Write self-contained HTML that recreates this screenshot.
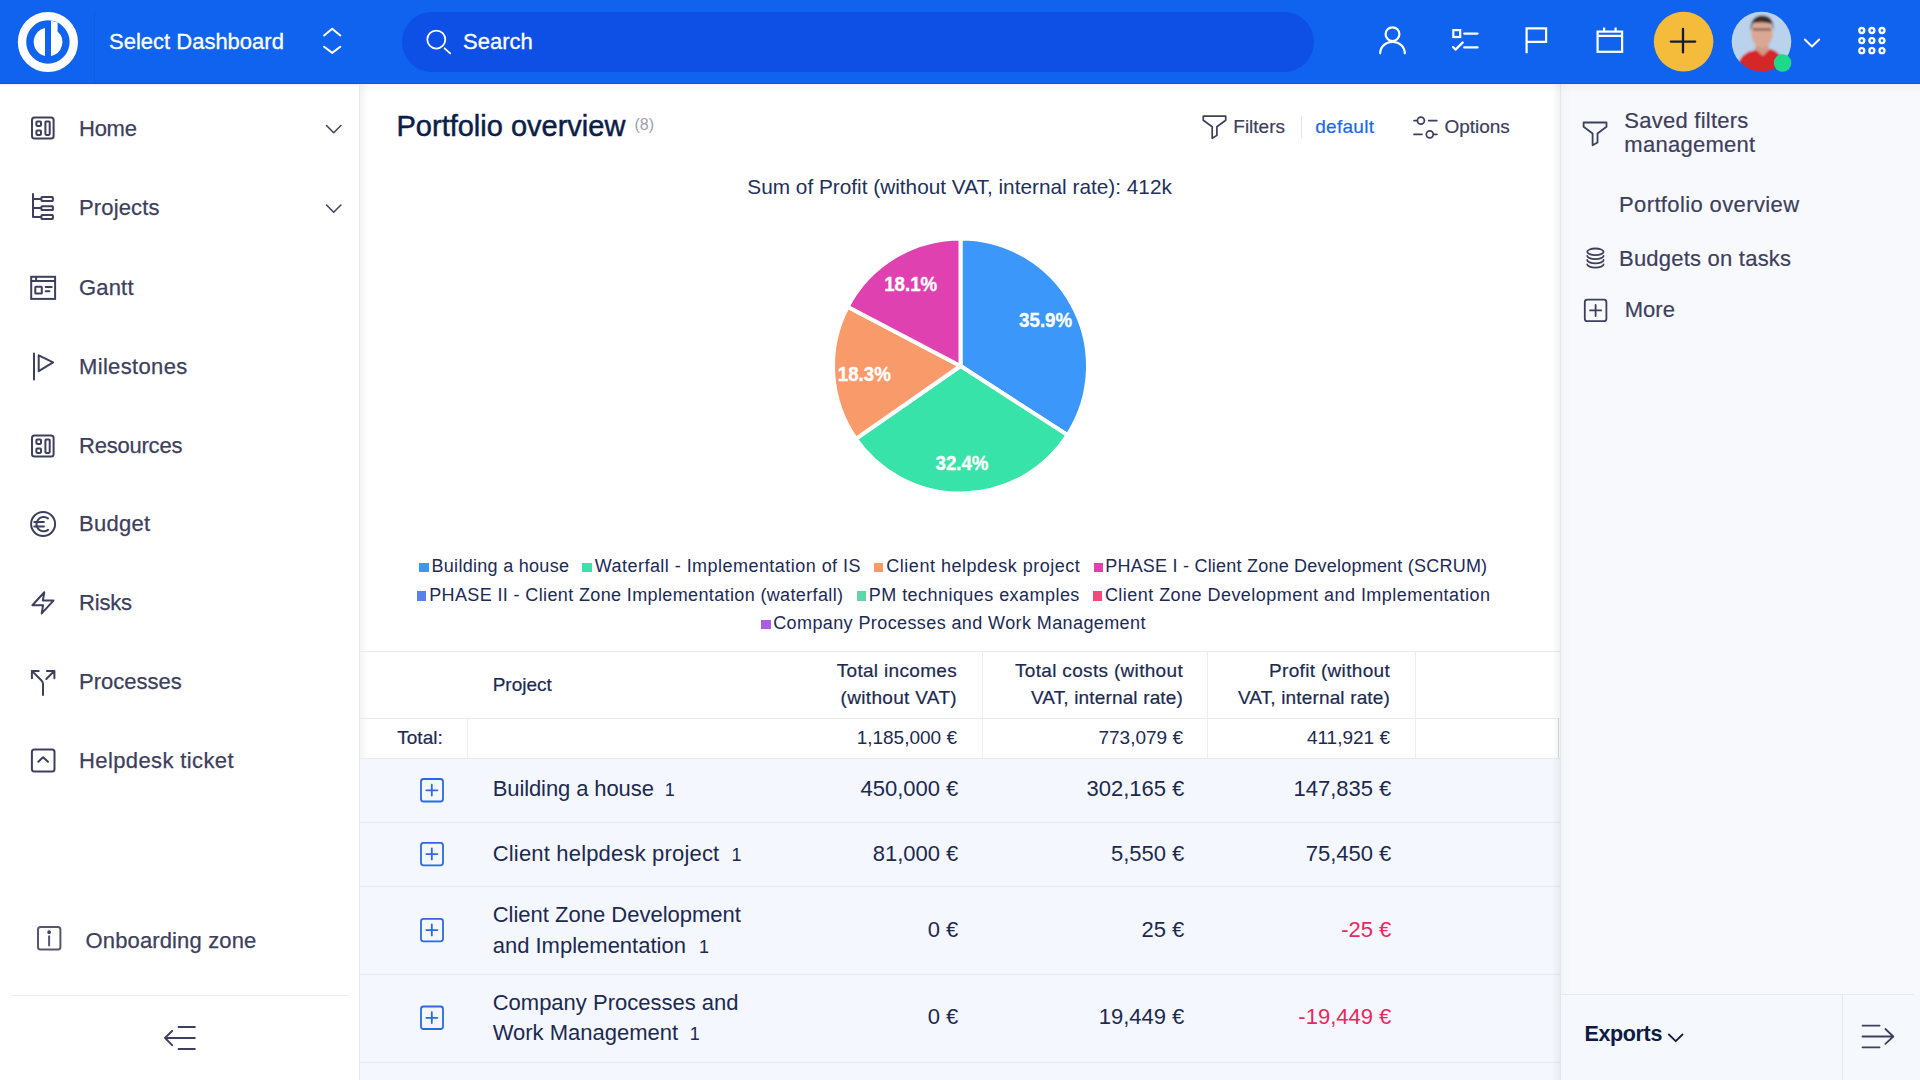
<!DOCTYPE html>
<html><head><meta charset="utf-8">
<style>
*{margin:0;padding:0;box-sizing:border-box}
html,body{width:1920px;height:1080px;overflow:hidden;background:#fff;font-family:"Liberation Sans",sans-serif}
.t{position:absolute;white-space:nowrap;line-height:1}
.r{text-align:right}
#top{position:absolute;left:0;top:0;width:1920px;height:84px;background:#1063ee}
#side{position:absolute;left:0;top:84px;width:360px;height:996px;background:#fff}
#main{position:absolute;left:360px;top:84px;width:1200px;height:996px;background:#fff}
#right{position:absolute;left:1560px;top:84px;width:360px;height:996px;background:#f8f9fd}
.mi{font-size:22px;color:#3d405c;left:79px;-webkit-text-stroke:0.25px #3d405c}
.lg{font-size:18px;color:#1c2a55}
.mk{position:absolute;width:9.5px;height:9.5px}
.th{font-size:19px;color:#1c2a50;-webkit-text-stroke:0.2px #1c2a50}
.ths{letter-spacing:0.32px}
.tv{font-size:19px;color:#1c2a50}
.rv{font-size:22px;color:#1c2a50}
.neg{color:#e8285e}
.hl{position:absolute;height:1px;background:#e8eaee}
.vl{position:absolute;width:1px;background:#eceef1}
.rp{font-size:22px;color:#3d405c;-webkit-text-stroke:0.2px #3d405c}
svg{position:absolute;overflow:visible}
</style></head><body>

<!-- TOP BAR -->
<div id="top"></div>
<div style="position:absolute;left:0;top:83px;width:1920px;height:1px;background:#0b57da"></div>
<div style="position:absolute;left:94px;top:12px;width:1px;height:72px;background:rgba(0,0,40,0.07)"></div>
<svg style="left:0;top:0" width="1920" height="84" viewBox="0 0 1920 84">
  <circle cx="47.9" cy="42" r="25.9" fill="none" stroke="#fff" stroke-width="8.4"/>
  <path d="M45 28.1 A14.2 14.2 0 0 0 45 55.9 Z" fill="#fff"/>
  <path d="M51 20.8 L57.6 22.6 L57.6 31.4 A14.2 14.2 0 0 1 51 55.9 Z" fill="#fff"/>
  <g fill="none" stroke="#fff" stroke-width="2" stroke-linecap="round" stroke-linejoin="round">
    <path d="M324.1 35.4 L332.2 28.7 L340.3 35.4"/>
    <path d="M324.1 46.7 L332.2 52.9 L340.3 46.7"/>
  </g>
</svg>
<div class="t" style="left:109px;top:31px;font-size:22px;color:#fff;-webkit-text-stroke:0.3px #fff">Select Dashboard</div>
<div style="position:absolute;left:402px;top:12px;width:912px;height:60px;border-radius:30px;background:#0e50e6"></div>
<svg style="left:0;top:0" width="1920" height="84" viewBox="0 0 1920 84">
  <g fill="none" stroke="#fff" stroke-width="1.8" stroke-linecap="round">
    <circle cx="436.3" cy="39.6" r="9"/>
    <path d="M444.6 48.3 L450.2 53.4"/>
  </g>
  <g fill="none" stroke="#fff" stroke-width="2.2" stroke-linecap="round" stroke-linejoin="round">
    <circle cx="1392.5" cy="34.2" r="6.9"/>
    <path d="M1380.2 53.3 A12.3 11.5 0 0 1 1404.8 53.3"/>
    <rect x="1453.3" y="30.1" width="6.9" height="6.9" stroke-linecap="butt" stroke-linejoin="miter"/>
    <path d="M1464.2 33.6 L1477.6 33.6 M1464.2 47.4 L1477.6 47.4"/>
    <path d="M1453 47 L1455.5 49.6 L1462.8 42.4"/>
    <path d="M1526.6 53.2 L1526.6 28.4 L1546.1 28.4 L1546.1 41.9 L1526.6 41.9" stroke-linecap="butt" stroke-linejoin="miter"/>
    <rect x="1597.6" y="31.6" width="24.5" height="20.2" stroke-linejoin="miter"/>
    <path d="M1597.6 35.9 L1622.1 35.9 M1604.1 27.6 L1604.1 31.6 M1615.6 27.6 L1615.6 31.6" stroke-linecap="butt"/>
  </g>
  <circle cx="1683.6" cy="41.6" r="29.8" fill="#f5bb3b"/>
  <path d="M1670.8 41.6 L1695.2 41.6 M1683 28.9 L1683 52.4" stroke="#121c35" stroke-width="2.3" stroke-linecap="round"/>
  <defs><clipPath id="av"><circle cx="1761.5" cy="41.6" r="29.8"/></clipPath></defs>
  <filter id="bl"><feGaussianBlur stdDeviation="0.9"/></filter>
  <g clip-path="url(#av)"><g filter="url(#bl)">
    <rect x="1728" y="8" width="68" height="68" fill="#bad2ec"/>
    <path d="M1756 44 L1768 44 L1770 56 L1754 56 Z" fill="#cf9a86"/>
    <ellipse cx="1762" cy="33" rx="10.8" ry="14.5" fill="#dba795"/>
    <path d="M1750.5 31 Q1750 16 1762 15.5 Q1774 15.5 1773.5 30 L1772 24 Q1764 21 1753 23 Z" fill="#3a2c27"/>
    <path d="M1753 29.5 L1771 29.5" stroke="#4b3a35" stroke-width="1.6"/>
    <path d="M1736 74 Q1737 58 1748 52 L1756 50 L1763 56 L1770 49 Q1779 51 1785 62 L1788 74 Z" fill="#d5282c"/>
  </g></g>
  <circle cx="1782.6" cy="63" r="8.8" fill="#1fd98b"/>
  <path d="M1804.8 39.5 L1811.9 46.4 L1819.2 39.5" fill="none" stroke="#fff" stroke-width="2" stroke-linecap="round" stroke-linejoin="round"/>
  <g fill="none" stroke="#fff" stroke-width="2.3">
    <circle cx="1861.8" cy="30.5" r="2.5"/><circle cx="1871.9" cy="30.5" r="2.5"/><circle cx="1882" cy="30.5" r="2.5"/>
    <circle cx="1861.8" cy="40.6" r="2.5"/><circle cx="1871.9" cy="40.6" r="2.5"/><circle cx="1882" cy="40.6" r="2.5"/>
    <circle cx="1861.8" cy="50.7" r="2.5"/><circle cx="1871.9" cy="50.7" r="2.5"/><circle cx="1882" cy="50.7" r="2.5"/>
  </g>
</svg>
<div class="t" style="left:463px;top:31.2px;font-size:22px;color:#fff;-webkit-text-stroke:0.3px #fff">Search</div>

<!-- LEFT SIDEBAR -->
<div id="side"></div>
<div style="position:absolute;left:0;top:84px;width:360px;height:3px;background:linear-gradient(to bottom,rgba(0,0,0,0.05),rgba(0,0,0,0))"></div>
<div class="t mi" style="top:117.7px;letter-spacing:-0.26px">Home</div>
<div class="t mi" style="top:196.6px;letter-spacing:0.15px">Projects</div>
<div class="t mi" style="top:277.4px;letter-spacing:0.18px">Gantt</div>
<div class="t mi" style="top:355.8px;letter-spacing:0.34px">Milestones</div>
<div class="t mi" style="top:435.4px;letter-spacing:-0.22px">Resources</div>
<div class="t mi" style="top:513.3px;letter-spacing:0.30px">Budget</div>
<div class="t mi" style="top:591.8px;letter-spacing:-0.2px">Risks</div>
<div class="t mi" style="top:671.4px;letter-spacing:-0.00px">Processes</div>
<div class="t mi" style="top:750.3px;letter-spacing:0.38px">Helpdesk ticket</div>
<div class="t mi" style="left:85.5px;top:930.2px;letter-spacing:0.14px">Onboarding zone</div>
<div class="hl" style="left:12px;top:995px;width:336px;background:#eceef2"></div>
<svg style="left:0;top:0" width="360" height="1080" viewBox="0 0 360 1080">
 <g fill="none" stroke="#3d405c" stroke-width="2" stroke-linecap="round" stroke-linejoin="round">
  <!-- home -->
  <rect x="32" y="117.5" width="21.6" height="21.1" rx="2.5"/>
  <rect x="36.4" y="121.4" width="4.6" height="4.5" rx="0.8"/>
  <rect x="36.4" y="130.6" width="4.6" height="4.3" rx="0.8"/>
  <rect x="45.4" y="121.4" width="4.3" height="13.5" rx="0.8"/>
  <path d="M326.5 125.5 L333.7 132.7 L340.9 125.5" stroke-width="1.6" stroke="#44465a"/>
  <!-- projects -->
  <path d="M33 193.9 L33 217.1 M33 198.9 L40.4 198.9 M33 208 L40.4 208 M33 217.1 L40.4 217.1"/>
  <rect x="41.4" y="197.1" width="11.5" height="3.8" rx="0.6"/>
  <rect x="41.4" y="206.2" width="11.5" height="3.8" rx="0.6"/>
  <rect x="41.4" y="215.1" width="11.5" height="3.8" rx="0.6"/>
  <path d="M326.5 205 L333.7 212.2 L340.9 205" stroke-width="1.6" stroke="#44465a"/>
  <!-- gantt -->
  <rect x="31.2" y="276.8" width="23.9" height="22.1" stroke-linejoin="miter"/>
  <path d="M31.2 281 L55.1 281 M36.1 276.8 L36.1 281"/>
  <rect x="35.3" y="286.8" width="6.5" height="6.7" rx="0.6"/>
  <path d="M45.7 286.9 L51.7 286.9 M45.7 291.3 L49.4 291.3"/>
  <!-- milestones -->
  <path d="M34 353.6 L34 379.5"/>
  <path d="M38.7 355.3 L53.1 362.3 L38.7 371.2 Z"/>
  <!-- resources -->
  <rect x="32" y="435.5" width="21.6" height="21.1" rx="2.5"/>
  <rect x="36.4" y="439.4" width="4.6" height="4.5" rx="0.8"/>
  <rect x="36.4" y="448.6" width="4.6" height="4.3" rx="0.8"/>
  <rect x="45.4" y="439.4" width="4.3" height="13.5" rx="0.8"/>
  <!-- budget -->
  <circle cx="43.1" cy="524" r="12"/>
  <path d="M48 518.4 A7.2 7.2 0 1 0 48 529.9"/>
  <path d="M34.3 522 L43.9 522 M34.3 526.4 L43.9 526.4"/>
  <!-- risks -->
  <path d="M44.3 592.3 L32.4 605.2 L43.1 605.2 L41.7 613.4 L53.5 600.6 L42.8 600.6 Z"/>
  <!-- processes -->
  <path d="M38.7 670.9 L31.9 670.9 L31.9 678.3 M31.9 670.9 L41.5 680.5 Q43 682 43 684 L43 695"/>
  <path d="M46.9 670.9 L54.4 670.9 L54.4 678.3 M54.4 670.9 L46.3 679"/>
  <!-- helpdesk -->
  <rect x="31.9" y="749.4" width="22.6" height="22.2" rx="2.5"/>
  <path d="M38.3 761.8 L43.1 757.2 L48 761.8"/>
  <!-- onboarding -->
  <rect x="38" y="926.9" width="22.4" height="22.7" rx="2.5" stroke="#55576e"/>
  <path d="M49.1 936.3 L49.1 945.4" stroke="#55576e"/>
  <circle cx="49.1" cy="932.2" r="0.9" fill="#3d405c"/>
  <!-- collapse -->
  <path d="M178.6 1027.1 L194.8 1027.1 M165 1037.9 L194.8 1037.9 M178.6 1049 L194.8 1049 M172.1 1031 L165 1037.9 L172.1 1045.1"/>
 </g>
</svg>

<!-- MAIN -->
<div style="position:absolute;left:359px;top:84px;width:1px;height:996px;background:#e8e8ea"></div>
<div style="position:absolute;left:360px;top:84px;width:9px;height:996px;background:linear-gradient(to right,rgba(0,0,0,0.045),rgba(0,0,0,0))"></div>
<div class="t" style="left:396.5px;top:111.7px;font-size:29px;color:#0b1e48;-webkit-text-stroke:0.5px #0b1e48">Portfolio overview</div>
<div class="t" style="left:634.5px;top:116.9px;font-size:16px;color:#9ca1ad">(8)</div>
<svg style="left:0;top:0" width="1560" height="160" viewBox="0 0 1560 160">
 <g fill="none" stroke="#3d405c" stroke-width="1.7" stroke-linejoin="round" stroke-linecap="round">
  <path d="M1203.3 116.1 L1225.7 116.1 L1225.7 120.2 L1216.9 126.7 L1216.9 135.4 L1212.2 138.3 L1212.2 126.7 L1203.3 120.2 Z"/>
  <circle cx="1420.9" cy="120.6" r="3.5"/>
  <circle cx="1429.8" cy="134.3" r="3.5"/>
  <path d="M1414 120.6 L1417.4 120.6 M1428.7 120.6 L1436.9 120.6 M1414 134.3 L1422 134.3 M1433.3 134.3 L1436.9 134.3"/>
 </g>
</svg>
<div class="t" style="left:1233.3px;top:117.2px;font-size:19px;color:#3d405c;-webkit-text-stroke:0.2px #3d405c">Filters</div>
<div class="vl" style="left:1300.5px;top:116px;height:22px;background:#e2e4ea"></div>
<div class="t" style="left:1315.2px;top:117.2px;font-size:19px;color:#1769e8;letter-spacing:0.3px;-webkit-text-stroke:0.2px #1769e8">default</div>
<div class="t" style="left:1444.4px;top:117.2px;font-size:19px;color:#3d405c;-webkit-text-stroke:0.2px #3d405c">Options</div>

<!-- chart -->
<div class="t" style="left:747.3px;top:176.8px;font-size:20.8px;color:#22305a">Sum of Profit (without VAT, internal rate): 412k</div>
<svg style="left:0;top:0" width="1920" height="1080" viewBox="0 0 1920 1080">
<g stroke="#fff" stroke-width="4" stroke-linejoin="round">
<path d="M960.5 366 L960.50 238.50 A127.5 127.5 0 0 1 1067.67 435.07 Z" fill="#3b97f9"/>
<path d="M960.5 366 L1067.67 435.07 A127.5 127.5 0 0 1 855.80 438.77 Z" fill="#38e3a9"/>
<path d="M960.5 366 L855.80 438.77 A127.5 127.5 0 0 1 847.61 306.73 Z" fill="#f99a6b"/>
<path d="M960.5 366 L847.61 306.73 A127.5 127.5 0 0 1 960.50 238.50 Z" fill="#e041b1"/>
</g>
<g fill="#fff" stroke="#fff" stroke-width="0.35" font-family="Liberation Sans" font-weight="bold" font-size="20.4" text-anchor="middle">
<text x="1045.6" y="327.4" textLength="53" lengthAdjust="spacingAndGlyphs">35.9%</text>
<text x="962" y="470" textLength="53" lengthAdjust="spacingAndGlyphs">32.4%</text>
<text x="864.3" y="380.6" textLength="53" lengthAdjust="spacingAndGlyphs">18.3%</text>
<text x="910.7" y="291.1" textLength="53" lengthAdjust="spacingAndGlyphs">18.1%</text>
</g>
</svg>

<!-- legend -->
<div class="mk" style="left:419px;top:562.5px;background:#3b97f9"></div>
<div class="t lg" style="left:431.5px;top:556.9px;letter-spacing:0.29px">Building a house</div>
<div class="mk" style="left:582.3px;top:562.5px;background:#38e3a9"></div>
<div class="t lg" style="left:594.8px;top:556.9px;letter-spacing:0.46px">Waterfall - Implementation of IS</div>
<div class="mk" style="left:873.8px;top:562.5px;background:#f99a6b"></div>
<div class="t lg" style="left:886.3px;top:556.9px;letter-spacing:0.52px">Client helpdesk project</div>
<div class="mk" style="left:1093.5px;top:562.5px;background:#e041b1"></div>
<div class="t lg" style="left:1105.2px;top:556.9px;letter-spacing:0.22px">PHASE I - Client Zone Development (SCRUM)</div>

<div class="mk" style="left:416.6px;top:591.4px;background:#5a80ee"></div>
<div class="t lg" style="left:429.2px;top:585.8px;letter-spacing:0.37px">PHASE II - Client Zone Implementation (waterfall)</div>
<div class="mk" style="left:856.9px;top:591.4px;background:#62d6a9"></div>
<div class="t lg" style="left:868.8px;top:585.8px;letter-spacing:0.45px">PM techniques examples</div>
<div class="mk" style="left:1092.7px;top:591.4px;background:#f2487c"></div>
<div class="t lg" style="left:1104.9px;top:585.8px;letter-spacing:0.46px">Client Zone Development and Implementation</div>

<div class="mk" style="left:761px;top:619.9px;background:#a95fe0"></div>
<div class="t lg" style="left:773.2px;top:614.3px;letter-spacing:0.4px">Company Processes and Work Management</div>

<!-- table -->
<div style="position:absolute;left:360px;top:758.5px;width:1200px;height:322px;background:#f4f7fd"></div>
<div class="hl" style="left:360px;top:651px;width:1200px"></div>
<div class="hl" style="left:360px;top:718px;width:1200px"></div>
<div class="hl" style="left:360px;top:758px;width:1200px"></div>
<div class="hl" style="left:360px;top:821.5px;width:1200px"></div>
<div class="hl" style="left:360px;top:885.5px;width:1200px"></div>
<div class="hl" style="left:360px;top:974px;width:1200px"></div>
<div class="hl" style="left:360px;top:1062px;width:1200px"></div>
<div class="vl" style="left:981.5px;top:651px;height:107px"></div>
<div class="vl" style="left:1207px;top:651px;height:107px"></div>
<div class="vl" style="left:1414.5px;top:651px;height:107px"></div>
<div class="vl" style="left:467px;top:718px;height:40px"></div>
<div class="vl" style="left:1558px;top:718px;height:40px;background:#d8dbe2"></div>

<div class="t th" style="left:492.7px;top:674.6px">Project</div>
<div class="t th r ths" style="left:757px;width:200px;top:660.6px">Total incomes</div>
<div class="t th r ths" style="left:757px;width:200px;top:687.9px">(without VAT)</div>
<div class="t th r ths" style="left:983px;width:200px;top:660.6px">Total costs (without</div>
<div class="t th r ths" style="left:983px;width:200px;top:687.9px;letter-spacing:0.15px">VAT, internal rate)</div>
<div class="t th r ths" style="left:1190px;width:200px;top:660.6px">Profit (without</div>
<div class="t th r ths" style="left:1190px;width:200px;top:687.9px;letter-spacing:0.15px">VAT, internal rate)</div>

<div class="t th" style="left:397.3px;top:728.2px">Total:</div>
<div class="t tv r" style="left:757px;width:200px;top:728.2px">1,185,000 €</div>
<div class="t tv r" style="left:983px;width:200px;top:728.2px">773,079 €</div>
<div class="t tv r" style="left:1190px;width:200px;top:728.2px">411,921 €</div>

<svg style="left:0;top:0" width="1920" height="1080" viewBox="0 0 1920 1080">
 <g fill="none" stroke="#2b6be0" stroke-width="1.8" stroke-linecap="round">
  <rect x="421" y="779" width="22" height="22.5" rx="2.5"/><path d="M426.3 790.3 L437.4 790.3 M431.8 784.7 L431.8 795.6"/>
  <rect x="421" y="842.8" width="22" height="22.5" rx="2.5"/><path d="M426.3 854.1 L437.4 854.1 M431.8 848.5 L431.8 859.4"/>
  <rect x="421" y="918.8" width="22" height="22.5" rx="2.5"/><path d="M426.3 930.1 L437.4 930.1 M431.8 924.5 L431.8 935.4"/>
  <rect x="421" y="1006.5" width="22" height="22.5" rx="2.5"/><path d="M426.3 1017.8 L437.4 1017.8 M431.8 1012.2 L431.8 1023.1"/>
 </g>
</svg>
<div class="t rv" style="left:492.7px;top:778.1px;letter-spacing:-0.1px">Building a house<span style="font-size:18px;margin-left:11px;letter-spacing:0">1</span></div>
<div class="t rv r" style="left:758.3px;width:200px;top:778.1px">450,000 €</div>
<div class="t rv r" style="left:984.3px;width:200px;top:778.1px">302,165 €</div>
<div class="t rv r" style="left:1191.3px;width:200px;top:778.1px">147,835 €</div>

<div class="t rv" style="left:492.7px;top:843px;letter-spacing:0.18px">Client helpdesk project<span style="font-size:18px;margin-left:12px;letter-spacing:0">1</span></div>
<div class="t rv r" style="left:758.3px;width:200px;top:843px">81,000 €</div>
<div class="t rv r" style="left:984.3px;width:200px;top:843px">5,550 €</div>
<div class="t rv r" style="left:1191.3px;width:200px;top:843px">75,450 €</div>

<div class="t rv" style="left:492.7px;top:904.4px">Client Zone Development</div>
<div class="t rv" style="left:492.7px;top:934.8px">and Implementation<span style="font-size:18px;margin-left:13px">1</span></div>
<div class="t rv r" style="left:758.3px;width:200px;top:919.1px">0 €</div>
<div class="t rv r" style="left:984.3px;width:200px;top:919.1px">25 €</div>
<div class="t rv r neg" style="left:1191.3px;width:200px;top:919.1px">-25 €</div>

<div class="t rv" style="left:492.7px;top:992.1px">Company Processes and</div>
<div class="t rv" style="left:492.7px;top:1022.1px">Work Management<span style="font-size:18px;margin-left:11.5px">1</span></div>
<div class="t rv r" style="left:758.3px;width:200px;top:1005.7px">0 €</div>
<div class="t rv r" style="left:984.3px;width:200px;top:1005.7px">19,449 €</div>
<div class="t rv r neg" style="left:1191.3px;width:200px;top:1005.7px">-19,449 €</div>

<!-- RIGHT PANEL -->
<div id="right"></div>
<div style="position:absolute;left:1552px;top:84px;width:8px;height:996px;background:linear-gradient(to left,rgba(0,0,0,0.05),rgba(0,0,0,0))"></div>
<div style="position:absolute;left:1560px;top:84px;width:1px;height:996px;background:#e4e6ea"></div>
<div style="position:absolute;left:1561px;top:84px;width:10px;height:910px;background:linear-gradient(to right,rgba(0,0,0,0.018),rgba(0,0,0,0))"></div>
<div style="position:absolute;left:360px;top:84px;width:1560px;height:10px;background:linear-gradient(to bottom,rgba(0,0,0,0.035),rgba(0,0,0,0))"></div>
<div class="hl" style="left:1561px;top:994px;width:353px;background:#e8ebf1"></div>
<div style="position:absolute;left:1561px;top:995px;width:359px;height:85px;background:#f5f8fd"></div>
<div class="vl" style="left:1841.5px;top:995px;height:85px;background:#e4e7ee"></div>
<div class="t rp" style="left:1624.3px;top:110.4px;letter-spacing:0.25px">Saved filters</div>
<div class="t rp" style="left:1624.3px;top:133.9px;letter-spacing:0.28px">management</div>
<div class="t rp" style="left:1619px;top:193.7px;letter-spacing:0.38px">Portfolio overview</div>
<div class="t rp" style="left:1619px;top:247.6px;letter-spacing:0.22px">Budgets on tasks</div>
<div class="t rp" style="left:1624.8px;top:299.4px">More</div>
<svg style="left:0;top:0" width="1920" height="1080" viewBox="0 0 1920 1080">
 <g fill="none" stroke="#3d405c" stroke-width="1.8" stroke-linejoin="round" stroke-linecap="round">
  <path d="M1583.6 122.5 L1606.5 122.5 L1606.5 126.8 L1597.5 133.5 L1597.5 142.4 L1592.6 145.3 L1592.6 133.5 L1583.6 126.8 Z"/>
  <ellipse cx="1595.4" cy="251.8" rx="8.2" ry="3.3"/>
  <path d="M1587.2 255.8 A8.2 3.3 0 0 0 1603.6 255.8 M1587.2 260 A8.2 3.3 0 0 0 1603.6 260 M1587.2 264.3 A8.2 3.3 0 0 0 1603.6 264.3"/>
  <rect x="1584.8" y="299.6" width="21.6" height="21.6" rx="2.5"/>
  <path d="M1590.1 310.4 L1601.1 310.4 M1595.6 305 L1595.6 316"/>
  <path d="M1862.5 1025.6 L1879.6 1025.6 M1862.5 1036.5 L1893.3 1036.5 M1862.5 1047.3 L1879.6 1047.3 M1885.4 1029 L1893.3 1036.5 L1885.4 1043.9"/>
 </g>
 <path d="M1668.9 1034.5 L1675.7 1041.2 L1682.5 1034.5" fill="none" stroke="#0d1b45" stroke-width="1.8" stroke-linecap="round" stroke-linejoin="round"/>
</svg>
<div class="t" style="left:1584.4px;top:1023.6px;font-size:21.5px;font-weight:bold;color:#0d1b45;letter-spacing:-0.35px">Exports</div>
</body></html>
